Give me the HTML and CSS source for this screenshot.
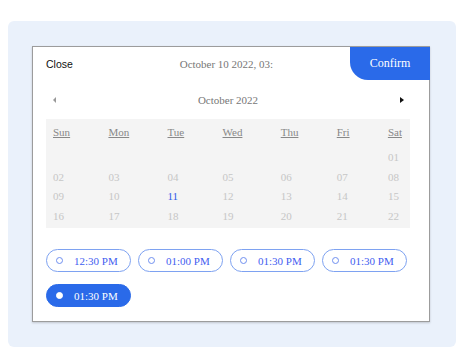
FILE: index.html
```html
<!DOCTYPE html>
<html>
<head>
<meta charset="utf-8">
<link rel="stylesheet" href="styles.css">
</head>
<body>
<div class="panel">
  <div class="card">
    <div class="head">
      <span class="close">Close</span>
      <span class="title">October 10 2022, 03:</span>
      <span class="confirm">Confirm</span>
    </div>
    <div class="body">
      <div class="nav">
        <span class="arrow left"></span>
        <span class="month">October 2022</span>
        <span class="arrow right"></span>
      </div>
      <div class="cal">
        <span class="dow">Sun</span><span class="dow">Mon</span><span class="dow">Tue</span><span class="dow">Wed</span><span class="dow">Thu</span><span class="dow">Fri</span><span class="dow">Sat</span>
        <span class="d first"></span><span class="d first"></span><span class="d first"></span><span class="d first"></span><span class="d first"></span><span class="d first"></span><span class="d first">01</span>
        <span class="d">02</span><span class="d">03</span><span class="d">04</span><span class="d">05</span><span class="d">06</span><span class="d">07</span><span class="d">08</span>
        <span class="d">09</span><span class="d">10</span><span class="d sel">11</span><span class="d">12</span><span class="d">13</span><span class="d">14</span><span class="d">15</span>
        <span class="d">16</span><span class="d">17</span><span class="d">18</span><span class="d">19</span><span class="d">20</span><span class="d">21</span><span class="d">22</span>
      </div>
      <div class="times">
        <span class="pill"><i class="dot"></i>12:30 PM</span>
        <span class="pill"><i class="dot"></i>01:00 PM</span>
        <span class="pill"><i class="dot"></i>01:30 PM</span>
        <span class="pill"><i class="dot"></i>01:30 PM</span>
        <span class="pill on"><i class="dot"></i>01:30 PM</span>
      </div>
    </div>
  </div>
</div>
</body>
</html>
```

FILE: styles.css
```css
html, body {
  margin: 0;
  padding: 0;
  background: #fff;
}
body {
  padding: 21px 0 0 8px;
  font-family: "Liberation Serif", "Times New Roman", serif;
}
.panel {
  width: 448px;
  height: 326px;
  box-sizing: border-box;
  padding: 25px 26px 25px 24px;
  background: #eaf1fb;
  border-radius: 6px;
}
.card {
  height: 276px;
  box-sizing: border-box;
  background: #fff;
  border: 1px solid #9c9c9c;
  box-shadow: 0 1px 2px rgba(0, 0, 0, 0.18);
}
.head {
  display: flex;
  align-items: center;
  height: 33px;
  padding-left: 13px;
}
.close {
  font-family: "Liberation Sans", Arial, sans-serif;
  font-size: 10.5px;
  color: #111;
}
.title {
  flex: 1;
  text-align: center;
  padding-left: 30px;
  font-size: 11px;
  color: #777;
  white-space: nowrap;
}
.confirm {
  width: 80px;
  height: 33px;
  margin-top: -1px;
  margin-right: -1px;
  display: flex;
  align-items: center;
  justify-content: center;
  background: #2a6ae9;
  color: #fff;
  font-family: "Liberation Serif", "Times New Roman", serif;
  font-size: 12px;
  border-bottom-left-radius: 18px;
}
.body {
  padding: 0 19px 0 13px;
}
.nav {
  display: flex;
  align-items: center;
  justify-content: space-between;
  height: 39px;
  padding: 0 6px 0 7px;
}
.month {
  font-size: 11px;
  color: #777;
}
.arrow {
  width: 0;
  height: 0;
  border-top: 3px solid transparent;
  border-bottom: 3px solid transparent;
}
.arrow.left {
  border-right: 3px solid #999;
}
.arrow.right {
  border-left: 4px solid #111;
}
.cal {
  display: grid;
  grid-template-columns: repeat(7, auto);
  justify-content: space-between;
  background: #f4f4f4;
  padding: 4px 8px 0 7px;
  height: 109px;
  box-sizing: border-box;
  align-content: start;
}
.dow {
  font-size: 11px;
  line-height: 19px;
  color: #888;
  text-decoration: underline;
}
.d {
  font-size: 11px;
  line-height: 19.5px;
  color: #c6c6c6;
}
.d.first {
  margin-top: 6px;
}
.d.sel {
  color: #2f5be8;
}
.times {
  display: flex;
  flex-wrap: wrap;
  gap: 12px 7px;
  margin-top: 21px;
}
.pill {
  width: 85px;
  height: 23px;
  box-sizing: border-box;
  border: 1px solid #7ea2f1;
  border-radius: 12px;
  display: flex;
  align-items: center;
  padding-left: 9px;
  font-size: 11px;
  color: #3f5ef0;
}
.dot {
  width: 5px;
  height: 5px;
  border: 1.2px solid #6f8ff0;
  border-radius: 50%;
  margin-right: 11px;
  box-sizing: content-box;
}
.pill.on {
  background: #2a6ae9;
  border-color: #2a6ae9;
  color: #fff;
}
.pill.on .dot {
  background: #fff;
  border-color: #fff;
}
```
